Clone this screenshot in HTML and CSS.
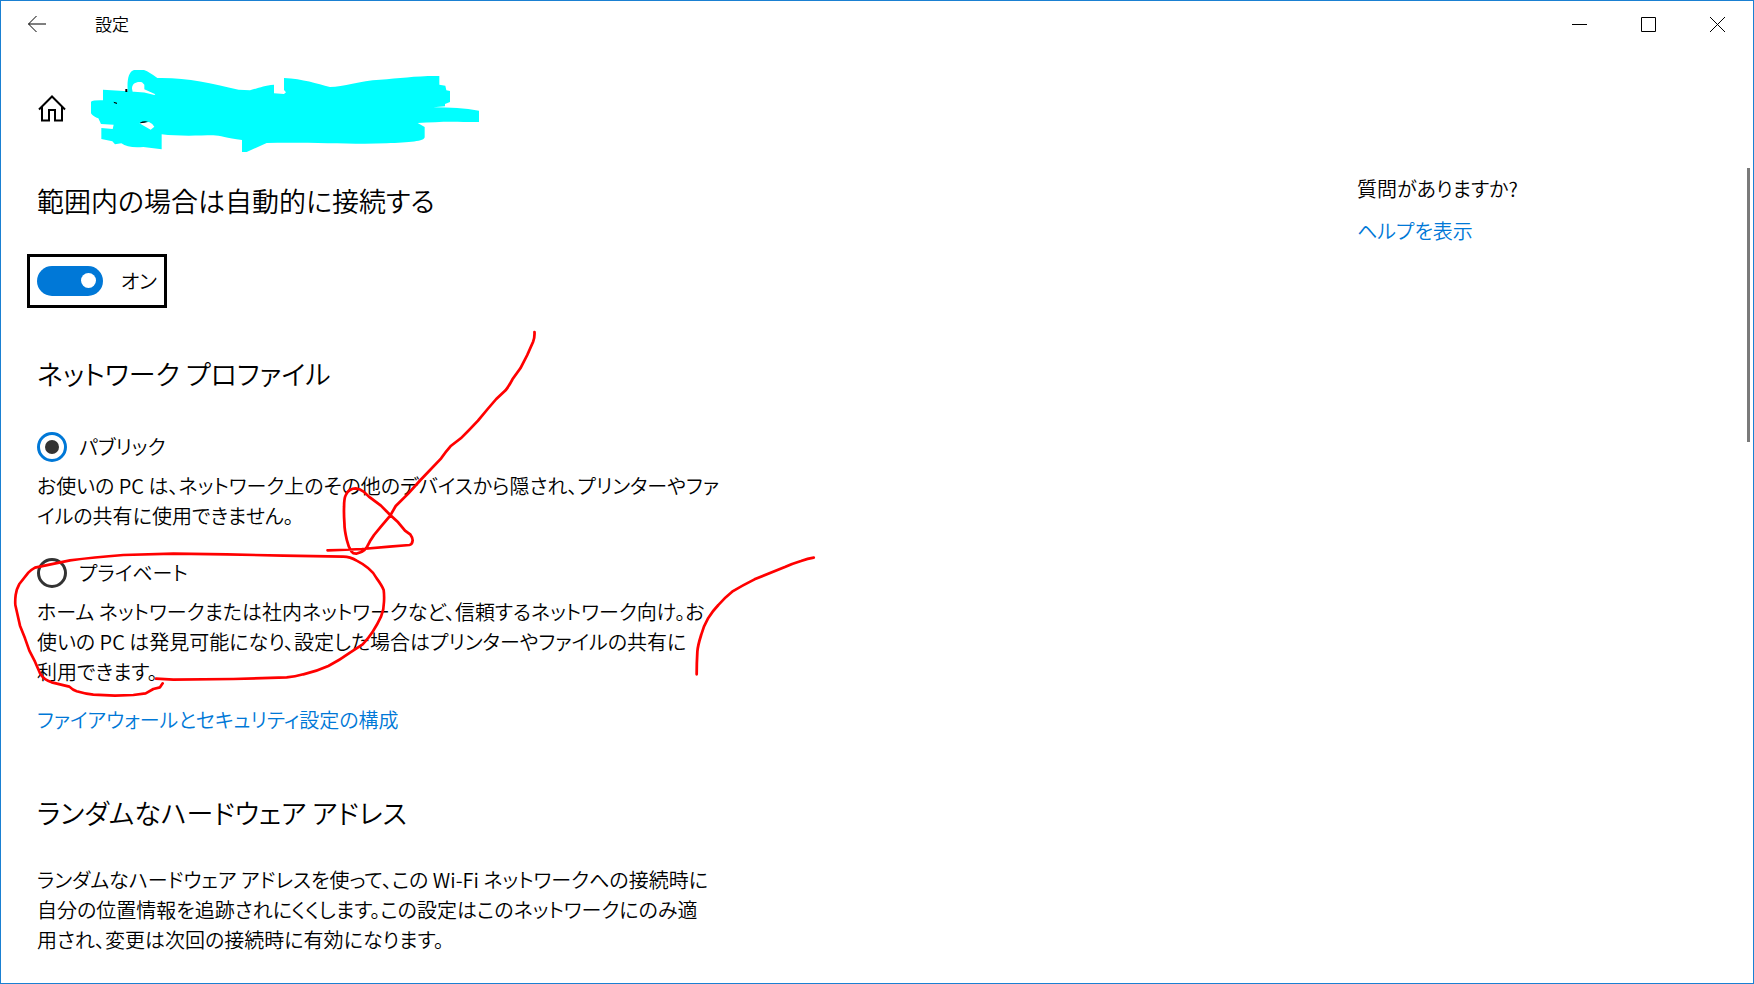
FILE: index.html
```html
<!DOCTYPE html>
<html lang="ja">
<head>
  <meta charset="UTF-8">
  <meta name="viewport" content="width=device-width, initial-scale=1.0">
  <title>設定</title>
  <link rel="stylesheet" href="styles.css">
</head>
<body>
  <div class="window">
    <header class="titlebar">
      <button type="button" class="back-btn" aria-label="戻る">
        <svg width="20" height="18" viewBox="0 0 20 18"><path d="M19 9H1.5M9.5 1L1.5 9l8 8"/></svg>
      </button>
      <span class="app-title">設定</span>
      <div class="window-controls">
        <button type="button" aria-label="最小化">
          <svg width="15" height="15" viewBox="0 0 15 15"><path d="M0 7.5h15"/></svg>
        </button>
        <button type="button" aria-label="最大化">
          <svg width="15" height="15" viewBox="0 0 15 15"><path d="M.5 .5h14v14H.5z"/></svg>
        </button>
        <button type="button" aria-label="閉じる">
          <svg width="15" height="15" viewBox="0 0 15 15"><path d="M0 0l15 15M15 0L0 15"/></svg>
        </button>
      </div>
    </header>

    <div class="page-header">
      <button type="button" class="home-btn" aria-label="ホーム">
        <svg width="28" height="27" viewBox="0 0 28 27"><path d="M1 14.500L14 1.500l13 13M4 12v13.500h7V15h6v10.500h7V12"/></svg>
      </button>
      <svg class="scribble" width="388" height="82" viewBox="273 210 1164 246" aria-hidden="true">
        <path class="scribble-fill" d="M383 270C381 240 386 214 402 210H432Q450 217 472 234C560 232 630 250 716 269L750 271C778 264 790 256 822 254V280L852 282L858 277L852 270V234C910 237 950 251 990 261C1030 261 1080 242 1140 239C1200 235 1250 227 1318 228V254L1336 257L1339 271L1350 273V306L1335 312V319L1300 322C1350 322 1395 324 1437 332V366H1390C1340 364 1300 367 1253 369L1274 381V410C1276 425 1230 426 1160 430C1060 434 930 426 800 429L740 456H726V420C680 415 660 406 640 406C590 407 530 409 485 403V448L430 441C400 443 378 441 364 430L345 433L337 424L304 417V384L338 387L341 374L303 372L295 355C282 349 273 343 273 338V305Q280 300 309 301V269L383 274Z"/>
        <path class="scribble-hole" d="M396 266C396 250 410 244 426 247L433 254V268L466 283L463 285Q430 274 398 275ZM418 370L447 366Q460 372 463 380L452 389Z"/>
        <path class="scribble-ink" d="M376 267h6v9h-6zM341 305l10 3v4l-9-3zM420 368q10-6 24-3q-10 4-24 5z"/>
      </svg>
    </div>

    <main class="content">
      <div class="settings">
        <section>
          <h2>範囲内の場合は自動的に接続する</h2>
          <label class="toggle">
            <input type="checkbox" role="switch" checked>
            <span>オン</span>
          </label>
        </section>

        <section class="profile">
          <h2>ネットワーク プロファイル</h2>
          <div class="option">
            <label class="radio">
              <input type="radio" name="profile" value="public" checked>
              <span>パブリック</span>
            </label>
            <p>お使いの PC は、ネットワーク上のその他のデバイスから隠され、プリンターやファ<br>イルの共有に使用できません。</p>
          </div>
          <div class="option">
            <label class="radio">
              <input type="radio" name="profile" value="private">
              <span>プライベート</span>
            </label>
            <p>ホーム ネットワークまたは社内ネットワークなど、信頼するネットワーク向け。お<br>使いの PC は発見可能になり、設定した場合はプリンターやファイルの共有に<br>利用できます。</p>
          </div>
          <a href="#">ファイアウォールとセキュリティ設定の構成</a>
        </section>

        <section class="hardware">
          <h2>ランダムなハードウェア アドレス</h2>
          <p>ランダムなハードウェア アドレスを使って、この Wi-Fi ネットワークへの接続時に<br>自分の位置情報を追跡されにくくします。この設定はこのネットワークにのみ適<br>用され、変更は次回の接続時に有効になります。</p>
        </section>
      </div>

      <aside class="help">
        <p>質問がありますか?</p>
        <a href="#">ヘルプを表示</a>
      </aside>
    </main>

    <div class="scroll-thumb"></div>

    <!-- red pen marks over the settings -->
    <svg class="pen" width="820" height="720" viewBox="0 0 2460 2160" aria-hidden="true">
      <g transform="translate(900 930) scale(1.033 1)">
        <path d="M681 66Q682 82 677 95L660 135L640 175L617 208Q607 228 597 241L570 267L545 297L517 332Q490 362 467 385L437 409Q423 425 410 445L350 510L315 550L278 588L262 617L235 650L215 675L203 694L195 710Q188 722 180 725L163 731Q154 731 150 725Q140 710 136 690Q129 660 129 640Q127 610 128 590Q128 565 133 555Q137 545 145 540Q153 535 162 535Q175 537 185 545L200 560L235 587L262 615L285 637L305 662L320 673Q328 685 327 692Q326 703 318 705L260 710L180 717L115 720L80 721"/>
        <path d="M1492 743Q1475 746 1455 753Q1430 761 1410 770L1320 808Q1285 826 1255 845Q1233 863 1215 885Q1198 903 1185 925Q1172 948 1165 975Q1155 1008 1154 1025Q1152 1060 1152 1093"/>
      </g>
      <g transform="translate(0 1590)">
        <path d="M468 446L520 449L700 447L860 442Q885 440 910 433Q950 424 985 408Q1020 390 1050 368L1088 343Q1105 325 1118 305Q1133 282 1143 260Q1152 238 1152 215Q1153 195 1151 180Q1145 165 1130 145Q1120 127 1105 115Q1090 102 1070 92Q1050 80 1030 80L850 77L680 73L520 71L370 75Q280 82 210 91L105 113Q94 119 85 128L58 162Q49 178 47 195Q45 210 46 225L60 287L75 325L88 362L105 395L120 430Q130 448 155 457L208 470Q218 480 230 484Q253 491 280 494L345 497L400 495L437 490L460 477L480 472L488 460"/>
      </g>
    </svg>
  </div>
</body>
</html>
```

FILE: styles.css
```css
* {
  margin: 0;
  padding: 0;
  box-sizing: border-box;
}

body {
  background-color: #fff;
  color: #000;
  font-family: "Noto Sans CJK JP", sans-serif;
  font-size: 20px;
  font-weight: 350;
  line-height: 30px;
  font-feature-settings: "palt";
}

button {
  display: flex;
  align-items: center;
  justify-content: center;
  border: none;
  background: none;
}

button svg {
  fill: none;
  stroke: #000;
}

a {
  color: #0078d7;
  text-decoration: none;
}

h2 {
  font-size: 27px;
  font-weight: 350;
  line-height: 40px;
}

.window {
  position: relative;
  min-height: 100vh;
  border: 1px solid #1a80d2;
}

.titlebar {
  display: flex;
  align-items: center;
  height: 46px;
}

.back-btn {
  width: 72px;
  height: 46px;
}

.app-title {
  flex: 1;
  padding-left: 22px;
  font-size: 17px;
}

.window-controls {
  display: flex;
  padding-right: 1px;
}

.window-controls button {
  width: 69px;
  height: 46px;
}

.page-header {
  display: flex;
  align-items: center;
  gap: 24px;
  padding: 23px 0 0 36px;
}

.home-btn {
  width: 30px;
  height: 82px;
  padding-bottom: 5px;
}

.home-btn svg {
  stroke-width: 2;
}

.scribble-fill {
  fill: #00ffff;
}

.scribble-hole {
  fill: #fff;
}

.scribble-ink {
  fill: #000;
}

.content {
  display: flex;
  padding: 29px 0 20px 36px;
}

.settings {
  flex: 1;
  white-space: nowrap;
}

.toggle {
  display: flex;
  align-items: center;
  gap: 18px;
  width: 140px;
  height: 54px;
  margin: 33px 0 0 -10px;
  padding: 0 7px 1px;
  border: 3px solid #000;
}

.toggle input {
  appearance: none;
  display: flex;
  align-items: center;
  justify-content: flex-end;
  width: 66px;
  height: 30px;
  padding-right: 7px;
  border-radius: 15px;
  background-color: #0078d7;
}

.toggle input::before {
  content: "";
  width: 15px;
  height: 15px;
  border-radius: 50%;
  background-color: #fff;
}

.profile {
  margin-top: 46px;
}

.profile h2 {
  margin-bottom: 38px;
}

.option {
  margin-bottom: 27px;
}

.option p {
  margin-top: 9px;
}

.radio {
  display: flex;
  align-items: center;
  gap: 12px;
  height: 30px;
}

.radio input {
  appearance: none;
  display: grid;
  place-items: center;
  width: 30px;
  height: 30px;
  border: 3px solid #333;
  border-radius: 50%;
}

.radio input:checked {
  border-color: #0078d7;
}

.radio input:checked::before {
  content: "";
  width: 14px;
  height: 14px;
  border-radius: 50%;
  background-color: #333;
}

.profile > a {
  display: block;
  margin-top: -9px;
}

.hardware {
  margin-top: 58px;
}

.hardware h2 {
  margin-bottom: 32px;
}

.help {
  display: flex;
  flex-direction: column;
  gap: 12px;
  width: 396px;
  margin-top: -7px;
}

.scroll-thumb {
  position: absolute;
  top: 167px;
  right: 3px;
  width: 3px;
  height: 274px;
  background-color: #7a7a7a;
}

.pen {
  position: absolute;
  top: -1px;
  left: -1px;
  pointer-events: none;
  fill: none;
  stroke: #ff0000;
  stroke-width: 8;
  stroke-linecap: round;
  stroke-linejoin: round;
}
```
